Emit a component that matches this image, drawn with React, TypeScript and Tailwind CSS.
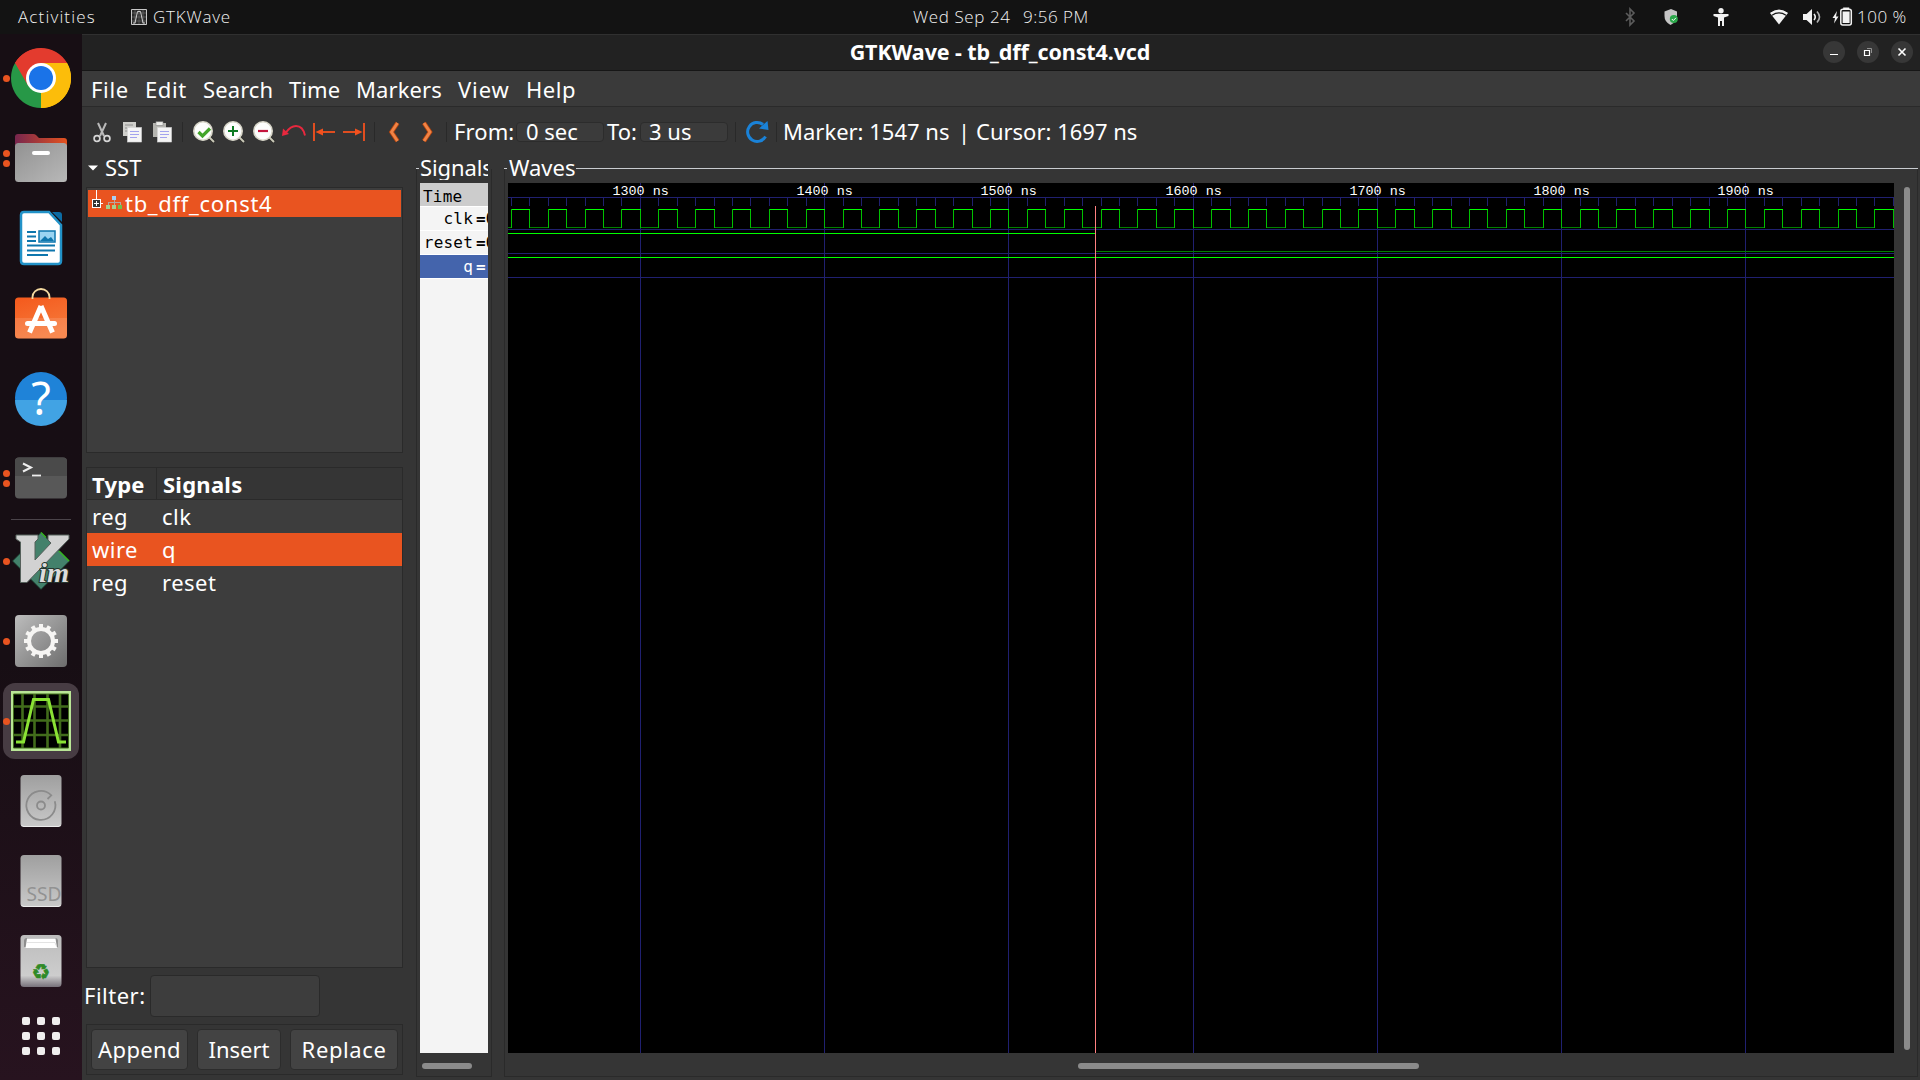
import React from "react";

const NS = 1.8425;
const timeToX = (t: number) => Math.floor((t - 1300) * NS + 132.4) + 0.5;

function Waveform() {
  const W = 1386;
  const H = 870;
  const hundreds = [1300, 1400, 1500, 1600, 1700, 1800, 1900];
  const ticks: number[] = [];
  for (let t = 1230; t <= 1980; t += 10) ticks.push(t);
  const clip = (x: number) => Math.max(0, Math.min(W - 0.5, x));
  const highs: React.ReactNode[] = [];
  for (let t = 1210; t <= 1980; t += 20) {
    const a = timeToX(t);
    const b = timeToX(t + 10);
    const c = timeToX(t + 20);
    highs.push(
      <g key={t}>
        <path d={`M${clip(b)} 44.5H${clip(c)}`} stroke="#008000" />
        {a > 0 && <path d={`M${clip(a)} 26V45`} stroke="#00c000" />}
        {b > 0 && <path d={`M${clip(b)} 26V45`} stroke="#00c000" />}
        {b > 0 && <path d={`M${clip(a)} 26.5H${clip(b) + 0.5}`} stroke="#00ff00" />}
      </g>,
    );
  }
  const marker = 587.5;
  return (
    <svg width={W} height={H} viewBox={`0 0 ${W} ${H}`} className="block bg-black" shapeRendering="crispEdges" fill="none">
      <g stroke="#202070">
        <path d={`M0 14.5H${W}`} />
        {[46.5, 70.5, 94.5].map((y) => (
          <path key={y} d={`M0 ${y}H${W}`} />
        ))}
        {ticks.map((t) => (
          <path key={t} d={`M${timeToX(t)} 15V23`} />
        ))}
        {hundreds.map((t) => (
          <path key={t} d={`M${timeToX(t)} 0V${H}`} />
        ))}
      </g>
      {highs}
      <path d={`M0 50.5H${marker}`} stroke="#00ff00" />
      <path d={`M${marker} 68.5H${W}`} stroke="#008000" />
      <path d={`M0 74.5H${W}`} stroke="#00ff00" />
      <path d={`M${marker} 23V${H}`} stroke="#ff8080" />
      <g fill="#ffffff" className="font-['Liberation_Mono',monospace] text-[13.4px]">
        {hundreds.map((t) => (
          <text key={t} x={timeToX(t) - 28} y={12}>
            {t} ns
          </text>
        ))}
      </g>
    </svg>
  );
}

function DockItem({ dots = 0, active = false, children }: { dots?: number; active?: boolean; children: React.ReactNode }) {
  return (
    <div className="relative flex h-20 w-[82px] shrink-0 items-center justify-center">
      {active && <div className="absolute top-[2px] left-[3px] h-[76px] w-[76px] rounded-xl bg-[#473c43]" />}
      <div className="absolute top-0 left-[3px] flex h-20 flex-col justify-center gap-[3px]">
        {Array.from({ length: dots }).map((_, i) => (
          <div key={i} className="h-[7px] w-[7px] rounded-full bg-[#e95420]" />
        ))}
      </div>
      <svg width="64" height="64" viewBox="0 0 64 64" className="relative block">
        {children}
      </svg>
    </div>
  );
}

function Dock() {
  return (
    <nav className="flex w-[82px] shrink-0 flex-col bg-linear-to-b from-[#170e14] from-60% to-[#27131f] pt-1">
      <DockItem dots={1}>
        <path d="M32 32L6 17A30 30 0 0 1 58 17Z" fill="#e33b2e" />
        <path d="M32 32L58 17A30 30 0 0 1 32 62Z" fill="#fcbd0a" />
        <path d="M32 32L32 62A30 30 0 0 1 6 17Z" fill="#279847" />
        <path d="M32 17H58L56 15A30 30 0 0 0 6 17L19 39.500Z" fill="#e33b2e" />
        <path d="M45 39.500L32 62A30 30 0 0 0 58 17H32Z" fill="#fcbd0a" />
        <circle cx="32" cy="32" r="15" fill="#fff" />
        <circle cx="32" cy="32" r="12" fill="#1a73e8" />
      </DockItem>
      <DockItem dots={2}>
        <defs>
          <linearGradient id="folderBack" x1="0" x2="1">
            <stop offset="0" stopColor="#77264e" />
            <stop offset="1" stopColor="#e4521f" />
          </linearGradient>
          <linearGradient id="folderFront" x1="0" y1="0" x2="1" y2="1">
            <stop offset="0" stopColor="#929292" />
            <stop offset="1" stopColor="#b8b8b8" />
          </linearGradient>
        </defs>
        <path d="M6 24V11Q6 8 9 8H24Q26 8 27 9L30 12H55Q58 12 58 15V24Z" fill="url(#folderBack)" />
        <rect x="6" y="17" width="52" height="39" rx="3.500" fill="url(#folderFront)" />
        <rect x="23" y="25" width="18" height="4" rx="2" fill="#fff" />
      </DockItem>
      <DockItem>
        <path d="M15 6H40L52 19V55Q52 58 49 58H15Q12 58 12 55V9Q12 6 15 6Z" fill="#fff" stroke="#2292c8" strokeWidth="2.500" />
        <path d="M43 6H50Q53 6 53 9V16Z" fill="#0c6ba3" />
        <g stroke="#0e76ad" strokeWidth="2">
          <path d="M18 26H27M18 30.500H27M18 35H27M18 39.500H46M18 44.500H46M18 49H39" />
        </g>
        <rect x="30" y="25" width="16" height="11" fill="#9ad4f2" stroke="#0e76ad" strokeWidth="1.500" />
        <path d="M31 35L36 30L39 33L42 31L45 35Z" fill="#0e76ad" />
      </DockItem>
      <DockItem>
        <defs>
          <linearGradient id="bag" x1="0" y1="0" x2="0.4" y2="1">
            <stop offset="0" stopColor="#f4591c" />
            <stop offset="1" stopColor="#f6793a" />
          </linearGradient>
        </defs>
        <rect x="6" y="11.500" width="52" height="41" rx="3.500" fill="url(#bag)" />
        <path d="M6 32H58V49Q58 52.500 54.500 52.500H9.500Q6 52.500 6 49Z" fill="#fff" opacity="0.12" />
        <path d="M23.500 13V11A8.500 8 0 0 1 40.500 11V13" fill="none" stroke="#f4d9a0" strokeWidth="1.800" />
        <path d="M32 20L20.500 46.500M32 20L43.500 46.500" stroke="#fff" strokeWidth="5" strokeLinejoin="round" />
        <path d="M18.500 37.500H45.500" stroke="#fff" strokeWidth="5" strokeLinecap="round" />
      </DockItem>
      <DockItem>
        <circle cx="32" cy="32" r="26" fill="#1f83d8" />
        <path d="M6 34H58A26 26 0 0 1 6 34Z" fill="#41a3e4" />
        <text x="32" y="48.500" textAnchor="middle" fill="#fff" className="font-['Noto_Sans',sans-serif] text-[45px]">
          ?
        </text>
      </DockItem>
      <DockItem dots={2}>
        <rect x="6" y="11.500" width="52" height="41" rx="4" fill="#585858" />
        <path d="M6 30V15.500Q6 11.500 10 11.500H54Q58 11.500 58 15.500V30Z" fill="#4a4a4a" />
        <path d="M14 17.500L22 21.500L14 25.500" fill="none" stroke="#eee" strokeWidth="2" />
        <path d="M23 29.500H32" stroke="#eee" strokeWidth="1.800" />
      </DockItem>
      <div className="flex h-[3px] items-center justify-center">
        <div className="h-px w-[60px] bg-[#4b444a]" />
      </div>
      <DockItem dots={1}>
        <path d="M32 3.500L60.500 32L32 60.500L3.500 32Z" fill="#43816b" stroke="#173327" strokeWidth="0.800" />
        <path d="M32 3.500L37 8.500M50 22L60 32" stroke="#35b420" strokeWidth="1.500" />
        <path
          d="M7 6H29V10L26 13V31L42 14L39 11V6H60V10L18 53.500H11.500V13L7 10Z"
          fill="#d2d2d2"
          stroke="#55605b"
          strokeWidth="1"
          strokeLinejoin="round"
        />
        <text
          x="30"
          y="52.500"
          fill="#dcdcdc"
          stroke="#26352e"
          strokeWidth="2"
          paintOrder="stroke"
          className="font-['Liberation_Serif',serif] text-[27px] font-bold italic"
          textLength="30"
          lengthAdjust="spacingAndGlyphs"
        >
          im
        </text>
      </DockItem>
      <DockItem dots={1}>
        <defs>
          <linearGradient id="gearBox" x1="0" y1="0" x2="1" y2="1">
            <stop offset="0" stopColor="#bdbdbd" />
            <stop offset="1" stopColor="#6d6d6d" />
          </linearGradient>
        </defs>
        <rect x="6" y="6" width="52" height="52" rx="4" fill="url(#gearBox)" />
        <circle cx="32" cy="32" r="12" fill="none" stroke="#f6f5f3" strokeWidth="4" />
        {Array.from({ length: 12 }).map((_, i) => (
          <path key={i} d="M32 15V20" stroke="#f6f5f3" strokeWidth="4" transform={`rotate(${i * 30} 32 32)`} />
        ))}
      </DockItem>
      <DockItem dots={1} active>
        <rect x="2" y="2" width="60" height="60" fill="#b9e596" />
        <rect x="4.500" y="5" width="55" height="54" fill="#000" />
        <path d="M13.500 5V59M25.500 5V59M38.500 5V59M51 5V59M5 17.500H59M5 31.500H59M5 46H59" stroke="#416c1b" strokeWidth="2.600" />
        <path d="M4.500 5H59.500V59H4.500Z" fill="none" stroke="#416c1b" strokeWidth="1" />
        <path d="M7 53H14.500L24.500 10.500H39.500L49.500 53H57" fill="none" stroke="#8ae234" strokeWidth="3" />
      </DockItem>
      <DockItem>
        <DriveBody />
        <path d="M38.500 30L42.300 26.300A14.500 14.500 0 1 0 45.800 32.300" fill="none" stroke="#8b8b8b" strokeWidth="1.800" />
        <circle cx="32" cy="36.500" r="4" fill="none" stroke="#8b8b8b" strokeWidth="1.800" />
      </DockItem>
      <DockItem>
        <DriveBody />
        <text x="17.500" y="51.500" fill="#929292" className="font-['Noto_Sans',sans-serif] text-[20px]" textLength="35" lengthAdjust="spacingAndGlyphs">
          SSD
        </text>
      </DockItem>
      <DockItem>
        <defs>
          <linearGradient id="trash" x1="0" y1="0" x2="0" y2="1">
            <stop offset="0" stopColor="#bcbcbc" />
            <stop offset="0.78" stopColor="#cdcdcd" />
            <stop offset="1" stopColor="#77717a" />
          </linearGradient>
        </defs>
        <rect x="11.500" y="6" width="41" height="52" rx="3.500" fill="url(#trash)" />
        <path d="M15 18V12Q15 9 18 9H46Q49 9 49 12V18Z" fill="#8e8e8e" />
        <path d="M16.500 19L18 9.500H46.500L48 19Z" fill="#fff" />
        <path d="M18 13.500H46L47 16.500" fill="none" stroke="#dcdcdc" strokeWidth="0.800" />
        <text x="32" y="50" textAnchor="middle" fill="#2f8a26" stroke="#2f8a26" strokeWidth="0.500" className="font-['DejaVu_Sans',sans-serif] text-[21px]">
          ♻
        </text>
      </DockItem>
      <div className="flex h-[70px] items-center justify-center">
        <div className="grid grid-cols-3 gap-[7px]">
          {Array.from({ length: 9 }).map((_, i) => (
            <div key={i} className="h-2 w-2 rounded-[2px] bg-[#f0eeee]" />
          ))}
        </div>
      </div>
    </nav>
  );
}

function DriveBody() {
  return (
    <>
      <defs>
        <linearGradient id="drive" x1="0" y1="0" x2="0" y2="1">
          <stop offset="0" stopColor="#9f9f9f" />
          <stop offset="1" stopColor="#c9c9c9" />
        </linearGradient>
      </defs>
      <rect x="11.500" y="6" width="41" height="52" rx="3.500" fill="url(#drive)" />
      <path d="M12.500 56Q13.500 57.500 15 57.500H49Q50.500 57.500 51.500 56" fill="none" stroke="#ececec" />
    </>
  );
}

function TopBar() {
  return (
    <header className="flex h-[34px] shrink-0 items-center bg-[#131313] font-['Open_Sans','Noto_Sans',sans-serif] text-[17px] font-light text-[#f2f2f2]">
      <span className="w-[113px] pl-[18px] tracking-[1.15px]">Activities</span>
      <svg width="16" height="16" viewBox="0 0 16 16" className="ml-[18px] block" fill="none">
        <rect width="16" height="16" fill="#2b2b2b" />
        <path d="M0.500 0.500H15.500V15.500H0.500Z" stroke="#c8c8c8" />
        <path d="M4 1V15M8 1V15M12 1V15M1 4H15M1 8H15M1 12H15" stroke="#6a6a6a" strokeWidth="0.700" />
        <path d="M2 14H4L6.500 2.500H9.500L12 14H14" stroke="#d0d0d0" strokeWidth="1" />
      </svg>
      <span className="ml-[6px] w-[758px] tracking-[0.8px]">GTKWave</span>
      <span className="w-[111px] pl-[2px] tracking-[0.6px]">Wed Sep 24</span>
      <span className="w-[590px] pl-px tracking-[0.5px]">9:56 PM</span>
      <div className="flex items-center">
        <svg width="36" height="20" viewBox="0 0 36 20" fill="none">
          <path d="M14 6L22 14L18 18V2L22 6L14 14" stroke="#5c5c5c" strokeWidth="1.600" />
        </svg>
        <svg width="44" height="20" viewBox="0 0 44 20">
          <path d="M23 2L29 4.500V9Q29 15 22.500 18Q16.500 15 16.500 9V4.500Z" fill="#c4c4c4" />
          <circle cx="25.800" cy="12" r="4" fill="#2ba84a" />
          <path d="M23.800 12L25.300 13.500L28 10.800" stroke="#fff" strokeWidth="1" fill="none" />
        </svg>
        <svg width="59" height="20" viewBox="0 0 59 20" fill="#f2f2f2">
          <circle cx="29" cy="3.800" r="2.700" />
          <path d="M21.500 7H36.500V9L32 10.500V19H30V14H28V19H26V10.500L21.500 9Z" />
        </svg>
        <svg width="49" height="20" viewBox="0 0 49 20" fill="none">
          <path d="M19 6Q28 -1 37 6L28 17.500Z" fill="#f2f2f2" />
          <path d="M20 6.500Q28 1.200 36 6.500" stroke="#f2f2f2" strokeWidth="1.800" />
          <path d="M21 8.300Q28 3.600 35 8.300" stroke="#131313" strokeWidth="1.200" />
        </svg>
        <svg width="32" height="20" viewBox="0 0 32 20" fill="none">
          <path d="M3 7H6.500L12 2V18L6.500 13H3Z" fill="#f2f2f2" />
          <path d="M14 7Q16.500 10 14 13" stroke="#f2f2f2" strokeWidth="1.600" />
          <path d="M17 4.500Q22 10 17 15.500" stroke="#b0b0b0" strokeWidth="1.600" />
        </svg>
        <svg width="24" height="20" viewBox="0 0 24 20" fill="none">
          <path d="M5 4L0.500 11H3L2 16.500L6.500 9.500H4Z" fill="#f2f2f2" />
          <rect x="8.800" y="2.300" width="10.500" height="15.700" rx="2" stroke="#f2f2f2" strokeWidth="1.500" />
          <rect x="11.200" y="0.500" width="6" height="2" fill="#f2f2f2" />
          <rect x="10.600" y="4.500" width="7" height="11.500" fill="#f2f2f2" />
        </svg>
      </div>
      <span className="ml-px tracking-[0.5px]">100 %</span>
    </header>
  );
}

function TitleBar() {
  return (
    <div className="relative flex h-[37px] shrink-0 items-center justify-center border-t border-b border-t-[#303030] border-b-[#161616] bg-[#222222]">
      <span className="-mt-[2px] mr-[2px] text-[21.5px] leading-none font-bold tracking-[-0.1px] text-white">GTKWave - tb_dff_const4.vcd</span>
      <div className="absolute top-[6px] right-[7px] flex gap-3">
        <WindowButton>
          <path d="M7 13.500H15" />
        </WindowButton>
        <WindowButton>
          <path d="M7.500 9.500H12.500V14.500H7.500Z" />
          <path d="M10 7.500H14.500V12" stroke="#909090" strokeWidth="1" />
        </WindowButton>
        <WindowButton>
          <path d="M7.500 7.500L14.500 14.500M14.500 7.500L7.500 14.500" strokeWidth="1.600" />
        </WindowButton>
      </div>
    </div>
  );
}

function WindowButton({ children }: { children: React.ReactNode }) {
  return (
    <svg width="22" height="22" viewBox="0 0 22 22" fill="none" stroke="#fff" strokeWidth="1.200" className="rounded-full bg-[#373737]">
      {children}
    </svg>
  );
}

function MenuBar() {
  return (
    <div className="flex h-9 shrink-0 items-center border-b border-[#2a2a2a] bg-[#3a3a3a] pl-[9px] text-[22px] leading-none">
      <span className="w-[54px] tracking-[0.7px]">File</span>
      <span className="w-[58px] tracking-[0.6px]">Edit</span>
      <span className="w-[86px] tracking-[0.1px]">Search</span>
      <span className="w-[67px] tracking-[0.1px]">Time</span>
      <span className="w-[102px] tracking-[0.1px]">Markers</span>
      <span className="w-[68px] tracking-[0.9px]">View</span>
      <span className="tracking-[0.5px]">Help</span>
    </div>
  );
}

function Sep() {
  return <div className="h-5 w-px bg-[#292929]" />;
}

function Tool({ children }: { children: React.ReactNode }) {
  return (
    <svg width="24" height="24" viewBox="0 0 24 24" fill="none" className="mx-[3px] block shrink-0">
      {children}
    </svg>
  );
}

function Magnifier() {
  return (
    <>
      <path d="M17 17L22 22" stroke="#2a2a26" strokeWidth="3.600" />
      <path d="M17 17L22 22" stroke="#c9c8b8" strokeWidth="2" />
      <circle cx="11" cy="11" r="9.200" fill="#fdfdfc" stroke="#d8d6c8" strokeWidth="1.600" />
    </>
  );
}

function Toolbar() {
  return (
    <div className="flex h-[50px] shrink-0 items-center pl-[5px] text-[22px] leading-none">
      <Tool>
        <path d="M8 3L14 16M16 3L10 16" stroke="#b9b9b9" strokeWidth="2" />
        <circle cx="7" cy="18.500" r="2.900" stroke="#d6d6d6" strokeWidth="1.700" />
        <circle cx="17" cy="18.500" r="2.900" stroke="#d6d6d6" strokeWidth="1.700" />
      </Tool>
      <Tool>
        <rect x="3" y="2" width="13" height="14" fill="#cfcfcb" />
        <path d="M5 5H13M5 8H10M5 11H8" stroke="#909090" strokeWidth="1" />
        <rect x="7.500" y="7.500" width="14" height="14.500" fill="#f4f4f4" stroke="#d5d5d5" strokeWidth="0.600" />
        <path d="M10 11.500H19M10 14.500H19M10 17.500H17" stroke="#a2a2ee" strokeWidth="1.200" />
      </Tool>
      <Tool>
        <rect x="3" y="3" width="13" height="14" fill="#b5b5b0" />
        <rect x="6" y="1.800" width="7" height="3.500" fill="#efefec" stroke="#8b8b8b" strokeWidth="0.600" />
        <rect x="7.500" y="7.500" width="14" height="14.500" fill="#f4f4f4" stroke="#d5d5d5" strokeWidth="0.600" />
        <path d="M10 11.500H19M10 14.500H19M10 17.500H17" stroke="#a2a2ee" strokeWidth="1.200" />
      </Tool>
      <div className="ml-[5px] mr-[6px]"><Sep /></div>
      <Tool>
        <Magnifier />
        <path d="M6.500 12L10.500 16L18 8.500" stroke="#43a52a" strokeWidth="3.200" />
      </Tool>
      <Tool>
        <Magnifier />
        <path d="M6 11H16M11 6V16" stroke="#0d7a22" strokeWidth="2" />
      </Tool>
      <Tool>
        <Magnifier />
        <path d="M6 11H16" stroke="#c4143c" strokeWidth="2.200" />
      </Tool>
      <Tool>
        <path d="M4 12.500Q8.500 6 14 6Q21 6 23 15.500" stroke="#e8283e" strokeWidth="1.900" />
        <path d="M0 16L1 8.500L7 14Z" fill="#e8283e" />
      </Tool>
      <Tool>
        <path d="M2 3V21" stroke="#f4511e" strokeWidth="1.800" />
        <path d="M8 12H23" stroke="#f4511e" strokeWidth="1.800" />
        <path d="M3.500 12L11 8.500V15.500Z" fill="#f4511e" />
      </Tool>
      <Tool>
        <path d="M22 3V21" stroke="#f4511e" strokeWidth="1.800" />
        <path d="M1 12H16" stroke="#f4511e" strokeWidth="1.800" />
        <path d="M20.500 12L13 8.500V15.500Z" fill="#f4511e" />
      </Tool>
      <div className="ml-[5px] mr-[4px]"><Sep /></div>
      <Tool>
        <path d="M15.500 3L9.500 12L15.500 21" stroke="#b9460f" strokeWidth="4.400" />
        <path d="M15.500 3L9.500 12L15.500 21" stroke="#f08446" strokeWidth="2.800" />
      </Tool>
      <div className="w-1" />
      <Tool>
        <path d="M8 3L14 12L8 21" stroke="#b9460f" strokeWidth="4.400" />
        <path d="M8 3L14 12L8 21" stroke="#f08446" strokeWidth="2.800" />
      </Tool>
      <div className="ml-[3px] mr-[7px]"><Sep /></div>
      <span className="mb-[3px] w-[62px] tracking-[0.1px]">From:</span>
      <div className="flex h-5 w-[88px] items-center rounded border border-[#2c2c2c] bg-[#3b3b3b] pb-[2px] pl-[9px]">0 sec</div>
      <span className="mb-[3px] w-[36px] pl-[3px]">To:</span>
      <div className="flex h-5 w-[88px] items-center rounded border border-[#2c2c2c] bg-[#3b3b3b] pb-[2px] pl-[8px]">3 us</div>
      <div className="mr-[6px] ml-[7px]"><Sep /></div>
      <Tool>
        <path d="M20.500 16.500A9.500 9.500 0 1 1 18 4.500" stroke="#1a82d8" strokeWidth="3" />
        <path d="M14 8.500L23.500 10L22.500 1Z" fill="#1a82d8" />
      </Tool>
      <div className="mr-[6px] ml-[4px]"><Sep /></div>
      <span className="mb-[3px] w-[175px]">Marker: 1547 ns</span>
      <span className="mb-[3px] w-[18px]">|</span>
      <span className="mb-[3px]">Cursor: 1697 ns</span>
    </div>
  );
}

function Sidebar() {
  return (
    <aside className="flex w-[334px] shrink-0 flex-col text-[22px] leading-none">
      <div className="flex h-8 items-center pl-[6px]">
        <svg width="10" height="6" viewBox="0 0 10 6" className="mr-[7px] mb-[6px]">
          <path d="M0 0.500H10L5 5.500Z" fill="#fff" />
        </svg>
        <span className="mb-[8px]">SST</span>
      </div>
      <div className="ml-1 h-[266px] w-[317px] border border-[#2a2a2a] bg-[#3d3d3d] px-px pt-[2px]">
        <div className="flex h-[27px] items-center bg-[#e95420]">
          <svg width="37" height="27" viewBox="0 0 37 27" fill="none" shapeRendering="crispEdges">
            <path d="M8.500 0V10M13 13.500H15" stroke="#fff" />
            <rect x="4.500" y="9.500" width="8" height="8" fill="#333" stroke="#fff" />
            <path d="M6 13.500H11M8.500 11V16" stroke="#fff" />
            <rect x="24" y="6" width="4" height="4" fill="#a9cff5" />
            <path d="M26 10V13M20 15V12.500H32V15M26 12V15" stroke="#b9a59d" />
            <rect x="18" y="15" width="4" height="4" fill="#a6cf8e" />
            <rect x="24" y="15" width="4" height="4" fill="#a6cf8e" />
            <rect x="30" y="15" width="4" height="4" fill="#6cbf4b" />
          </svg>
          <span className="mb-[2px] tracking-[0.7px]">tb_dff_const4</span>
        </div>
      </div>
      <div className="mt-[14px] ml-1 h-[501px] w-[317px] border border-[#2a2a2a] bg-[#3d3d3d]">
        <div className="flex h-8 border-b border-[#2a2a2a] bg-[#353535] font-bold">
          <span className="flex w-[70px] items-center border-r border-[#2a2a2a] pl-[5px] tracking-[0.2px]">Type</span>
          <span className="flex items-center pl-[6px] tracking-[0.25px]">Signals</span>
        </div>
        <Row type="reg" name="clk" />
        <Row type="wire" name="q" selected />
        <Row type="reg" name="reset" />
      </div>
      <div className="mt-[7px] flex h-[42px] items-center pl-[2px]">
        <span className="mb-[2px] w-[66px] tracking-[0.5px]">Filter:</span>
        <div className="h-[42px] w-[170px] rounded border border-[#2a2a2a] bg-[#3d3d3d]" />
      </div>
      <div className="mt-[7px] ml-1 flex h-[51px] w-[317px] items-center gap-[9px] border border-[#2a2a2a] px-[4px]">
        <Button className="w-[97px] tracking-[0.35px]">Append</Button>
        <Button className="w-[84px]">Insert</Button>
        <Button className="w-[108px] tracking-[0.6px]">Replace</Button>
      </div>
    </aside>
  );
}

function Button({ className, children }: { className: string; children: React.ReactNode }) {
  return (
    <button className={`flex h-[41px] items-center justify-center rounded border border-[#2c2c2c] bg-[#434343] pb-[2px] ${className}`}>
      {children}
    </button>
  );
}

function Row({ type, name, selected = false }: { type: string; name: string; selected?: boolean }) {
  return (
    <div className={`flex h-[33px] items-center pb-[2px] tracking-[0.5px] ${selected ? "bg-[#e95420]" : ""}`}>
      <span className="w-[70px] pl-[5px]">{type}</span>
      <span className="pl-[5px]">{name}</span>
    </div>
  );
}

function SignalRow({ name, value, selected = false }: { name: string; value: string; selected?: boolean }) {
  return (
    <div className={`flex h-6 items-center border-b border-white pt-px ${selected ? "bg-[#4464ac] text-white" : "bg-[#f4f4f4] text-black"}`}>
      <span className="w-[53px] shrink-0 text-right">{name}</span>
      <span className="shrink-0 pl-[3px] font-bold">{value}</span>
    </div>
  );
}

function SignalsPane() {
  return (
    <section className="flex w-[76px] shrink-0 flex-col">
      <div className="flex h-[26px] items-center">
        <div className="h-px w-[3px] bg-[#c9ccd0]" />
        <span className="mb-[2px] ml-px w-[68px] overflow-hidden text-[22px] leading-[26px] tracking-[-0.1px]">Signals</span>
      </div>
      <div className="-mt-3 flex h-[908px] flex-col border-x border-b border-[#2a2a2a] px-[3px] pt-[14px]">
        <div className="h-[870px] w-[68px] overflow-hidden bg-[#f4f4f4] font-['DejaVu_Sans_Mono',monospace] text-[16px] leading-none tracking-[0.2px] whitespace-pre">
          <div className="flex h-6 items-center border-b border-white bg-[#cccccc] pt-1 pl-[3px] text-black">Time</div>
          <SignalRow name="clk" value="=0" />
          <SignalRow name="reset" value="=0" />
          <SignalRow name="q" value="=" selected />
        </div>
        <div className="mt-[10px] ml-[2px] h-[6px] w-[50px] rounded-full bg-[#8b8b8b]" />
      </div>
    </section>
  );
}

function WavesPane() {
  return (
    <section className="ml-3 flex w-[1414px] shrink-0 flex-col">
      <div className="flex h-[26px] items-center">
        <div className="h-px w-[3px] bg-[#c9ccd0]" />
        <span className="mb-[2px] ml-[2px] w-[67px] text-[22px] leading-[26px]">Waves</span>
        <div className="h-px flex-1 bg-[#c9ccd0]" />
      </div>
      <div className="-mt-3 flex h-[908px] flex-col border-x border-b border-[#2a2a2a] pt-[14px] pl-[3px]">
        <div className="flex">
          <Waveform />
          <div className="mt-1 ml-[10px] h-[863px] w-[6px] rounded-full bg-[#8b8b8b]" />
        </div>
        <div className="mt-[10px] ml-[570px] h-[6px] w-[341px] rounded-full bg-[#8b8b8b]" />
      </div>
    </section>
  );
}

export default function App() {
  return (
    <div className="flex h-[1080px] w-[1920px] flex-col overflow-hidden bg-[#353535] font-['Noto_Sans',sans-serif] whitespace-nowrap text-white">
      <TopBar />
      <div className="flex min-h-0 flex-1">
        <Dock />
        <main className="flex flex-1 flex-col">
          <TitleBar />
          <MenuBar />
          <Toolbar />
          <div className="-mt-[2px] flex flex-1">
            <Sidebar />
            <SignalsPane />
            <WavesPane />
          </div>
        </main>
      </div>
    </div>
  );
}
